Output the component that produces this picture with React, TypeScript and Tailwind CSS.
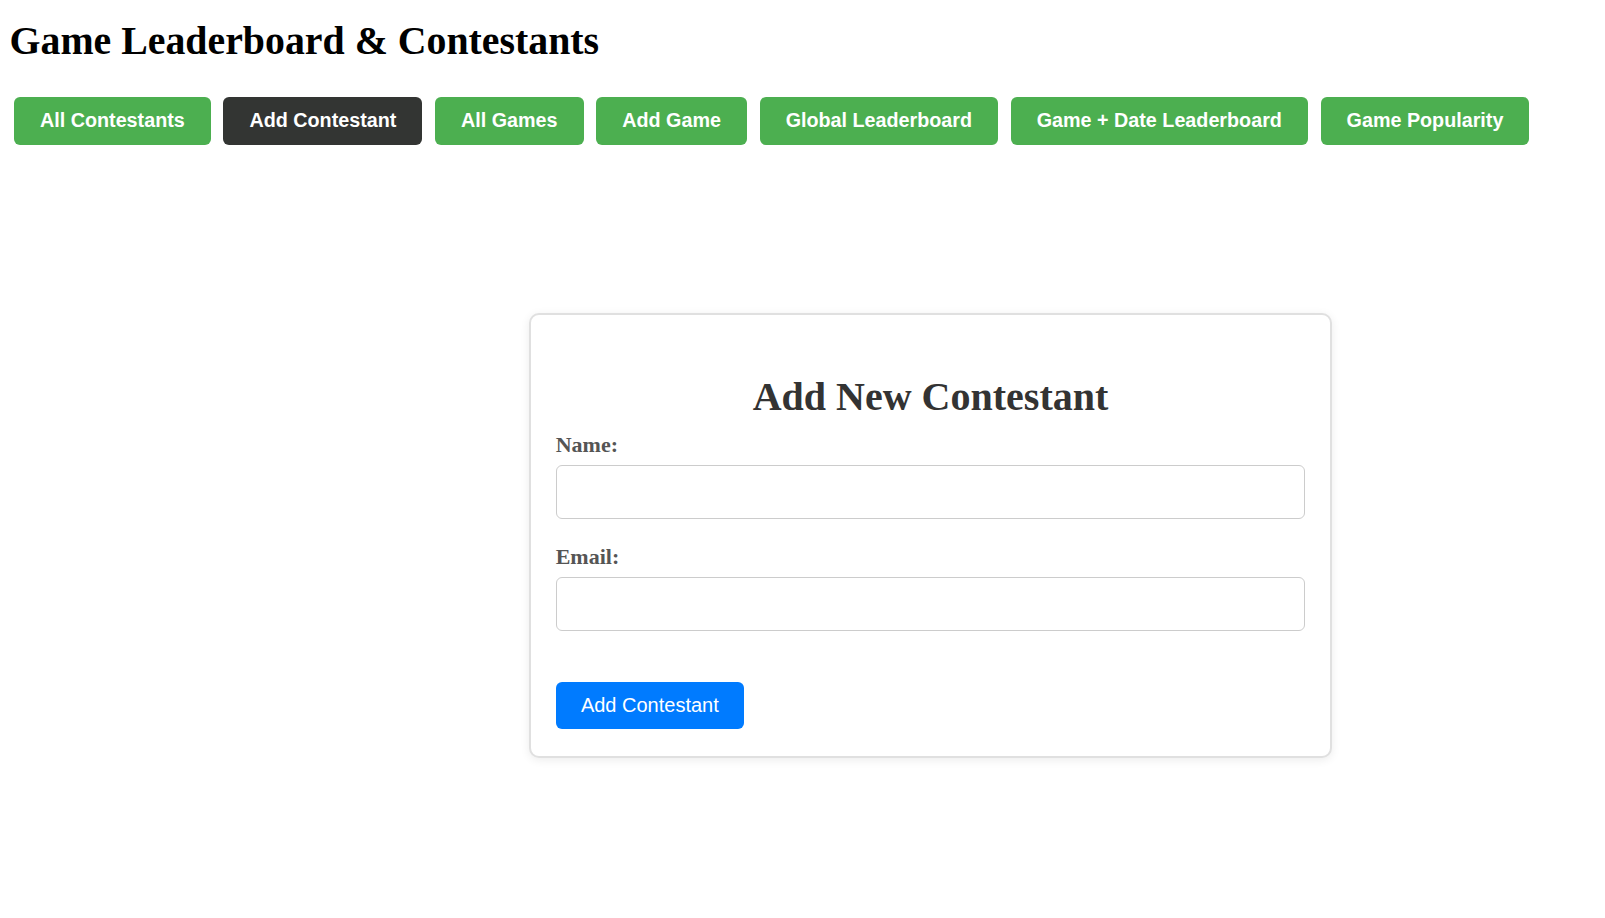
const tabs = [
  'All Contestants',
  'Add Contestant',
  'All Games',
  'Add Game',
  'Global Leaderboard',
  'Game + Date Leaderboard',
  'Game Popularity',
]

export default function App() {
  const active = 'Add Contestant'

  return (
    <div className="min-h-screen bg-white font-['Liberation_Serif',serif] text-black">
      {/* Header */}
      <div className="pt-[18px] pl-[9.5px]">
        <h1 className="text-[39.85px] leading-[45.4px] font-bold">Game Leaderboard &amp; Contestants</h1>
      </div>

      {/* Nav */}
      <nav className="mt-[33.3px] ml-[14px] flex gap-[12.7px]">
        {tabs.map((t) => (
          <button
            key={t}
            className={`h-[48px] px-[26px] rounded-[6px] text-white font-bold text-[19.74px] leading-[22.7px] font-['Liberation_Sans',Arial,sans-serif] ${
              t === active ? 'bg-[#333533]' : 'bg-[#4caf50]'
            }`}
          >
            {t}
          </button>
        ))}
      </nav>

      {/* Form card */}
      <div className="mt-[168.3px] ml-[529px] w-[803px] rounded-[10px] border-2 border-[#e0e0e0] bg-white px-[24.7px] pb-[26.3px] pt-[24.7px] shadow-[0_2px_10px_rgba(0,0,0,0.08)]">
        <h2 className="mt-[34px] mb-[13.5px] text-center text-[40px] leading-[45.4px] font-bold text-[#333]">
          Add New Contestant
        </h2>
        <form className="flex flex-col" onSubmit={(e) => e.preventDefault()}>
          <label className="text-[22px] leading-[24.9px] font-bold text-[#555]">Name:</label>
          <input
            type="text"
            className="mt-[7.2px] h-[54.7px] w-full rounded-[6px] border border-[#cccccc] px-3 outline-none"
          />
          <label className="mt-[25.5px] text-[22px] leading-[24.9px] font-bold text-[#555]">Email:</label>
          <input
            type="email"
            className="mt-[7.2px] h-[54px] w-full rounded-[6px] border border-[#cccccc] px-3 outline-none"
          />
          <div className="mt-[50.7px]">
            <button
              type="submit"
              className="h-[47.7px] px-[25.2px] rounded-[6px] bg-[#007bff] text-white text-[20px] leading-[22.7px] font-['Liberation_Sans',Arial,sans-serif]"
            >
              Add Contestant
            </button>
          </div>
        </form>
      </div>
    </div>
  )
}
